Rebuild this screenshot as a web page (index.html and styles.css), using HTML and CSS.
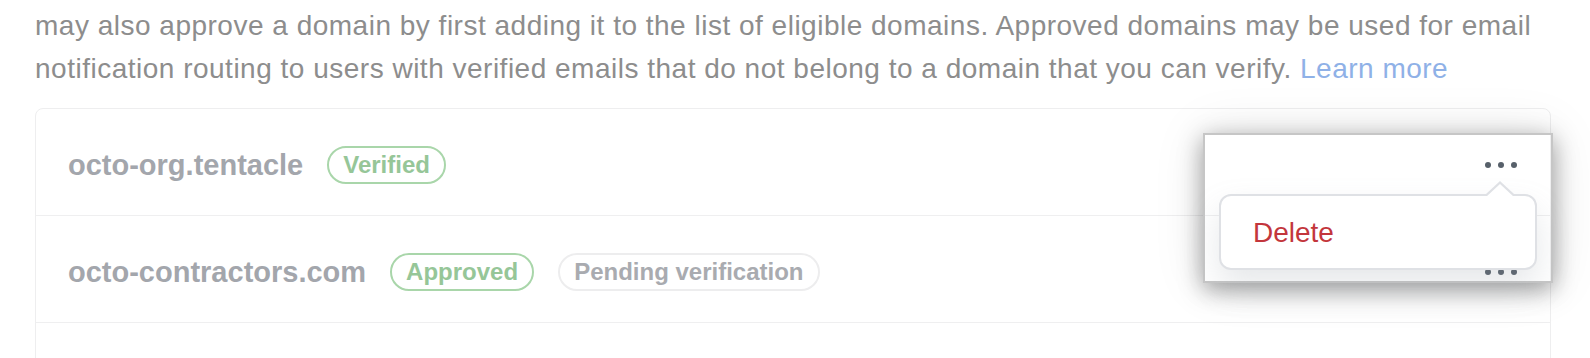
FILE: index.html
```html
<!DOCTYPE html>
<html lang="en">
<head>
<meta charset="utf-8">
<title>Domains</title>
<link rel="stylesheet" href="styles.css">
</head>
<body>
<main class="page">
  <p class="intro">may also approve a domain by first adding it to the list of eligible domains. Approved domains may be used for email<br>notification routing to users with verified emails that do not belong to a domain that you can verify. <a class="link" href="#">Learn more</a></p>
  <div class="card-wrap">
    <ul class="domain-list">
      <li class="domain-row">
        <span class="domain-name">octo-org.tentacle</span>
        <span class="badge badge-green">Verified</span>
        <div class="row-actions">
          <svg class="kebab" width="32" height="8" viewBox="0 0 32 8" aria-hidden="true"><circle cx="3" cy="4" r="3"/><circle cx="16" cy="4" r="3"/><circle cx="29" cy="4" r="3"/></svg>
          <div class="menu"><span class="menu-item">Delete</span></div>
        </div>
      </li>
      <li class="domain-row">
        <span class="domain-name">octo-contractors.com</span>
        <span class="badge badge-green">Approved</span>
        <span class="badge badge-muted">Pending verification</span>
        <div class="row-actions">
          <svg class="kebab" width="32" height="8" viewBox="0 0 32 8" aria-hidden="true"><circle cx="3" cy="4" r="3"/><circle cx="16" cy="4" r="3"/><circle cx="29" cy="4" r="3"/></svg>
        </div>
      </li>
      <li class="domain-row"></li>
    </ul>
    <div class="spotlight"></div>
  </div>
</main>
</body>
</html>
```

FILE: styles.css
```css
html, body {
  margin: 0;
  padding: 0;
  background: #ffffff;
  overflow: hidden;
}

body {
  font-family: "Liberation Sans", Arial, sans-serif;
}

.page {
  width: 1516px;
  padding: 4px 0 0 35px;
}

.intro {
  margin: 0 0 18px;
  font-size: 28px;
  letter-spacing: 0.5px;
  line-height: 43px;
  color: #8d8d8d;
  white-space: nowrap;
}

.link {
  color: #8fb1e7;
  text-decoration: none;
}

.card-wrap {
  position: relative;
}

.domain-list {
  list-style: none;
  margin: 0;
  padding: 0;
  border: 1px solid #eeeeef;
  border-radius: 8px;
}

.domain-row {
  display: flex;
  align-items: center;
  gap: 24px;
  height: 107px;
  box-sizing: border-box;
  padding: 6px 33px 0 32px;
  border-bottom: 1px solid #efeff0;
}

.domain-name {
  font-size: 29px;
  font-weight: 700;
  color: #a3a6ac;
}

.badge {
  display: inline-flex;
  align-items: center;
  box-sizing: border-box;
  height: 38px;
  padding: 0 14px;
  border: 2px solid;
  border-radius: 19px;
  font-size: 24px;
  font-weight: 700;
}

.badge-green {
  color: #96c698;
  border-color: #a9d6aa;
}

.badge-muted {
  color: #a9abb0;
  border-color: #ededee;
}

.row-actions {
  position: relative;
  margin-left: auto;
  display: flex;
}

.kebab {
  display: block;
  fill: #57606a;
}

.menu {
  position: absolute;
  top: 33px;
  right: -20px;
  z-index: 2;
  width: 318px;
  height: 76px;
  box-sizing: border-box;
  display: flex;
  align-items: center;
  padding: 2px 0 0 32px;
  background: #ffffff;
  border: 2px solid #dfe1e5;
  border-radius: 12px;
  box-shadow: 0 16px 32px rgba(140, 149, 159, 0.22);
}

.menu::before,
.menu::after {
  content: "";
  position: absolute;
  right: 21px;
  border: 14px solid transparent;
  border-top: 0;
}

.menu::before {
  top: -15px;
  border-bottom: 13px solid #dfe1e5;
}

.menu::after {
  top: -12px;
  border-bottom: 13px solid #ffffff;
}

.menu-item {
  font-size: 28px;
  color: #c3363c;
}

.spotlight {
  position: absolute;
  left: 1168px;
  top: 25px;
  width: 350px;
  height: 150px;
  box-sizing: border-box;
  border: 2px solid #c6c6c6;
  box-shadow: 0 6px 22px rgba(0, 0, 0, 0.36), 0 0 52px rgba(0, 0, 0, 0.1);
  z-index: 1;
  pointer-events: none;
}
```
